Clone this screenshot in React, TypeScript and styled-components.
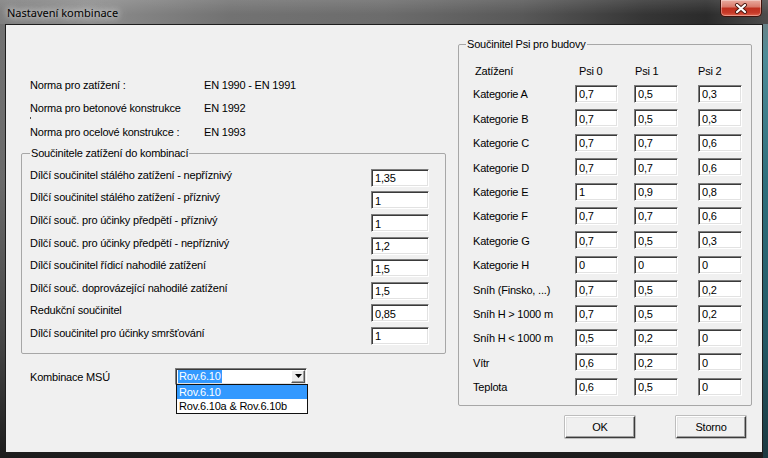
import React from "react";
import styled, { createGlobalStyle } from "styled-components";

const GlobalStyle = createGlobalStyle`
  html, body { margin: 0; padding: 0; }
  body { background: #2e2e2e; font-family: "Liberation Sans", Arial, sans-serif; }
  #root { width: 768px; height: 458px; overflow: hidden; }
  * { box-sizing: border-box; }
`;

const Window = styled.div`
  width: 768px;
  height: 458px;
  display: flex;
  flex-direction: column;
  background:
    linear-gradient(180deg, #7c7c7c 0%, #4f8c98 12%, #2f6f7c 40%, #245864 75%, #1b3940 100%) right top / 5px 100% no-repeat,
    linear-gradient(180deg, #747474 0%, #6a6a6a 40%, #444 75%, #1c1c1c 100%);
`;

const TitleBar = styled.div`
  height: 24px;
  flex: none;
  display: flex;
  align-items: flex-start;
  padding: 0 6px 0 7px;
  background:
    linear-gradient(180deg, rgba(255, 255, 255, 0.12) 0%, rgba(255, 255, 255, 0) 60%),
    linear-gradient(90deg, #7e7e7e 0%, #8c8c8c 12%, #727272 30%, #6c6c6c 50%, #585858 68%, #353535 84%, #2b2b2b 92%, #4c4c4c 100%);
`;

const Title = styled.span`
  flex: 1;
  margin-top: 5px;
  font-family: "Noto Sans", "Liberation Sans", sans-serif;
  font-size: 11px;
  line-height: 15px;
  color: #000;
  text-shadow: 0 0 6px rgba(255, 255, 255, 0.95), 0 0 12px rgba(255, 255, 255, 0.8);
`;

const CloseButton = styled.div`
  width: 42px;
  height: 17px;
  display: flex;
  align-items: center;
  justify-content: center;
  border: 1px solid #40120c;
  border-top: none;
  border-radius: 0 0 5px 5px;
  background: linear-gradient(180deg, #e9ab9f 0%, #d97a6c 42%, #bf2f1e 52%, #c63a29 80%, #e2664f 100%);
  box-shadow: inset 0 0 0 1px rgba(255, 255, 255, 0.35);
`;

const Frame = styled.div`
  flex: 1;
  display: flex;
  padding: 0 5px 5px 5px;
`;

const Client = styled.div`
  flex: 1;
  display: flex;
  align-items: flex-start;
  background: #f0f0f0;
  border: 1px solid #1e1e1e;
  font-family: "Liberation Sans", Arial, sans-serif;
  font-size: 11px;
  letter-spacing: -0.2px;
  color: #000;
`;

const LeftColumn = styled.div`
  flex: none;
  width: 425px;
  margin-left: 15px;
  padding-top: 49px;
  display: flex;
  flex-direction: column;
`;

const RightColumn = styled.div`
  flex: none;
  width: 294px;
  margin-left: 12px;
  padding-top: 12.5px;
  display: flex;
  flex-direction: column;
`;

const InfoGrid = styled.div`
  display: grid;
  grid-template-columns: 174px auto;
  grid-auto-rows: 23.3px;
  align-items: center;
  padding-left: 9px;
`;

const InfoText = styled.span`
  line-height: 13px;
  white-space: nowrap;
`;

const Tick = styled.span`
  display: block;
  width: 1px;
  height: 2px;
  margin: 2px 0 -4px;
  background: #555;
`;

const GroupBox = styled.fieldset<{ $pad: string; $w: number; $mt?: number }>`
  margin: ${(p) => p.$mt ?? 0}px 0 0 0;
  min-width: 0;
  width: ${(p) => p.$w}px;
  padding: ${(p) => p.$pad};
  border: 1px solid #a7a7a7;
  border-radius: 2px;
`;

const Legend = styled.legend<{ $shift?: number }>`
  padding: 0 1px;
  margin-left: ${(p) => p.$shift ?? 0}px;
  font-size: 11px;
  line-height: 13px;
  white-space: nowrap;
`;

const FactorGrid = styled.div`
  display: grid;
  grid-template-columns: 1fr 58px;
  grid-auto-rows: 18px;
  row-gap: 4.57px;
`;

const FactorLabel = styled.span`
  align-self: start;
  line-height: 13px;
  white-space: nowrap;
`;

const Field = styled.input<{ $w: number }>`
  width: ${(p) => p.$w}px;
  height: 18px;
  margin: 0;
  padding: 1px 2px 0 3px;
  background: #fff;
  border: 1px solid;
  border-color: #7d7d7d #ffffff #ffffff #7d7d7d;
  box-shadow: inset 1px 1px 0 #3a3a3a, inset -1px -1px 0 #e2e2e2;
  font-family: "Liberation Sans", Arial, sans-serif;
  font-size: 11px;
  letter-spacing: -0.2px;
  color: #000;
  outline: none;
`;

const ComboRow = styled.div`
  display: flex;
  align-items: center;
  margin-top: 14px;
`;

const ComboLabel = styled.span`
  width: 154px;
  padding-left: 9px;
  padding-top: 3px;
  line-height: 13px;
`;

const Combo = styled.div`
  position: relative;
  width: 132px;
  height: 17px;
  display: flex;
  align-items: center;
  justify-content: space-between;
  padding: 1px 1px 1px 2px;
  background: #fff;
  border: 1px solid;
  border-color: #7d7d7d #ffffff #ffffff #7d7d7d;
  box-shadow: inset 1px 1px 0 #3a3a3a, inset -1px -1px 0 #e2e2e2;
`;

const Selected = styled.span`
  background: #3399ff;
  color: #fff;
  line-height: 13px;
  padding: 0 1px;
`;

const DropButton = styled.span`
  width: 14px;
  height: 13px;
  display: flex;
  align-items: center;
  justify-content: center;
  background: #ececec;
  border: 1px solid;
  border-color: #ffffff #555 #555 #ffffff;
  box-shadow: inset -1px -1px 0 #a0a0a0;
`;

const DropList = styled.div`
  position: absolute;
  top: 100%;
  left: 0;
  width: 132px;
  background: #fff;
  border: 1px solid #111;
  display: flex;
  flex-direction: column;
  z-index: 2;
`;

const DropItem = styled.div<{ $active?: boolean }>`
  height: 14px;
  line-height: 14px;
  padding-left: 2px;
  white-space: nowrap;
  background: ${(p) => (p.$active ? "#3399ff" : "#fff")};
  color: ${(p) => (p.$active ? "#fff" : "#000")};
`;

const PsiGrid = styled.div`
  display: grid;
  grid-template-columns: 102px 59px 64px 44px;
  grid-template-rows: 14.6px repeat(13, 18px);
  row-gap: 6.4px;
  align-items: center;
`;

const PsiHead = styled.span<{ $indent: number }>`
  padding-left: ${(p) => p.$indent}px;
  line-height: 13px;
  white-space: nowrap;
`;

const PsiLabel = styled.span`
  line-height: 13px;
  padding-top: 2px;
  white-space: nowrap;
`;

const ButtonRow = styled.div`
  display: flex;
  justify-content: flex-end;
  gap: 41px;
  margin-top: 10.5px;
  padding-right: 6px;
`;

const Button = styled.button`
  width: 70px;
  height: 22px;
  margin: 0;
  padding: 0;
  background: #f0f0f0;
  border: 1px solid;
  border-color: #ffffff #3c3c3c #3c3c3c #ffffff;
  box-shadow: inset -1px -1px 0 #a0a0a0, inset 1px 1px 0 #e3e3e3, 0 0 0 0.5px #8a8a8a;
  font-family: "Liberation Sans", Arial, sans-serif;
  font-size: 11px;
  letter-spacing: -0.2px;
  color: #000;
`;

const norms = [
  { label: "Norma pro zatížení :", value: "EN 1990 - EN 1991" },
  { label: "Norma pro betonové konstrukce", value: "EN 1992", tick: true },
  { label: "Norma pro ocelové konstrukce :", value: "EN 1993" },
];

const factors = [
  ["Dílčí součinitel stálého zatížení - nepříznivý", "1,35"],
  ["Dílčí součinitel stálého zatížení - příznivý", "1"],
  ["Dílčí souč. pro účinky předpětí - příznivý", "1"],
  ["Dílčí souč. pro účinky předpětí - nepříznivý", "1,2"],
  ["Dílčí součinitel řídicí nahodilé zatížení", "1,5"],
  ["Dílčí souč. doprovázející nahodilé zatížení", "1,5"],
  ["Redukční součinitel", "0,85"],
  ["Dílčí součinitel pro účinky smršťování", "1"],
];

const psi: [string, string, string, string][] = [
  ["Kategorie A", "0,7", "0,5", "0,3"],
  ["Kategorie B", "0,7", "0,5", "0,3"],
  ["Kategorie C", "0,7", "0,7", "0,6"],
  ["Kategorie D", "0,7", "0,7", "0,6"],
  ["Kategorie E", "1", "0,9", "0,8"],
  ["Kategorie F", "0,7", "0,7", "0,6"],
  ["Kategorie G", "0,7", "0,5", "0,3"],
  ["Kategorie H", "0", "0", "0"],
  ["Sníh (Finsko, ...)", "0,7", "0,5", "0,2"],
  ["Sníh H > 1000 m", "0,7", "0,5", "0,2"],
  ["Sníh H < 1000 m", "0,5", "0,2", "0"],
  ["Vítr", "0,6", "0,2", "0"],
  ["Teplota", "0,6", "0,5", "0"],
];

export default function App() {
  return (
    <>
      <GlobalStyle />
      <Window>
        <TitleBar>
          <Title>Nastavení kombinace</Title>
          <CloseButton>
            <svg width="14" height="11" viewBox="0 0 14 11">
              <path d="M3 2 L11 9 M11 2 L3 9" stroke="#4a1810" strokeWidth="4" strokeLinecap="round" />
              <path d="M3 2 L11 9 M11 2 L3 9" stroke="#ffffff" strokeWidth="2.2" strokeLinecap="round" />
            </svg>
          </CloseButton>
        </TitleBar>
        <Frame>
          <Client>
            <LeftColumn>
              <InfoGrid>
                {norms.map((n) => (
                  <React.Fragment key={n.label}>
                    <InfoText>
                      {n.label}
                      {n.tick && <Tick />}
                    </InfoText>
                    <InfoText>{n.value}</InfoText>
                  </React.Fragment>
                ))}
              </InfoGrid>
              <GroupBox $w={425} $pad="9px 16px 8px 8px" $mt={3}>
                <Legend>Součinitele zatížení do kombinací</Legend>
                <FactorGrid>
                  {factors.map(([label, value]) => (
                    <React.Fragment key={label}>
                      <FactorLabel>{label}</FactorLabel>
                      <Field $w={58} readOnly defaultValue={value} />
                    </React.Fragment>
                  ))}
                </FactorGrid>
              </GroupBox>
              <ComboRow>
                <ComboLabel>Kombinace MSÚ</ComboLabel>
                <Combo>
                  <Selected>Rov.6.10</Selected>
                  <DropButton>
                    <svg width="7" height="4" viewBox="0 0 7 4">
                      <path d="M0 0 H7 L3.5 4 Z" fill="#000" />
                    </svg>
                  </DropButton>
                  <DropList>
                    <DropItem $active>Rov.6.10</DropItem>
                    <DropItem>Rov.6.10a &amp; Rov.6.10b</DropItem>
                  </DropList>
                </Combo>
              </ComboRow>
            </LeftColumn>
            <RightColumn>
              <GroupBox $w={294} $pad="13.5px 9px 9.2px 14px">
                <Legend $shift={-7}>Součinitel Psi pro budovy</Legend>
                <PsiGrid>
                  <PsiHead $indent={2}>Zatížení</PsiHead>
                  <PsiHead $indent={4}>Psi 0</PsiHead>
                  <PsiHead $indent={1}>Psi 1</PsiHead>
                  <PsiHead $indent={0}>Psi 2</PsiHead>
                  {psi.map(([label, a, b, c]) => (
                    <React.Fragment key={label}>
                      <PsiLabel>{label}</PsiLabel>
                      <Field $w={43} readOnly defaultValue={a} />
                      <Field $w={44} readOnly defaultValue={b} />
                      <Field $w={44} readOnly defaultValue={c} />
                    </React.Fragment>
                  ))}
                </PsiGrid>
              </GroupBox>
              <ButtonRow>
                <Button>OK</Button>
                <Button>Storno</Button>
              </ButtonRow>
            </RightColumn>
          </Client>
        </Frame>
      </Window>
    </>
  );
}
